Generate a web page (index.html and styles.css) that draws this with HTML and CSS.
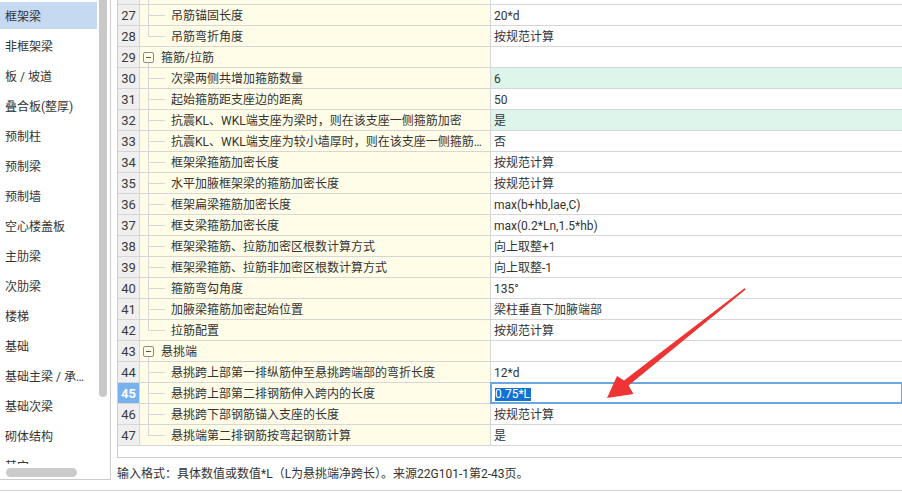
FILE: index.html
```html
<!DOCTYPE html>
<html lang="zh-CN">
<head>
<meta charset="utf-8">
<title>计算设置 - 框架梁</title>
<link rel="stylesheet" href="styles.css">
</head>
<body>
<div class="app">
  <div class="main">
    <aside class="sidebar">
      <div class="side-top">
        <ul class="side-list">
          <li class="side-item active">框架梁</li>
          <li class="side-item">非框架梁</li>
          <li class="side-item">板 / 坡道</li>
          <li class="side-item">叠合板(整厚)</li>
          <li class="side-item">预制柱</li>
          <li class="side-item">预制梁</li>
          <li class="side-item">预制墙</li>
          <li class="side-item">空心楼盖板</li>
          <li class="side-item">主肋梁</li>
          <li class="side-item">次肋梁</li>
          <li class="side-item">楼梯</li>
          <li class="side-item">基础</li>
          <li class="side-item">基础主梁 / 承台梁</li>
          <li class="side-item">基础次梁</li>
          <li class="side-item">砌体结构</li>
          <li class="side-item">其它</li>
        </ul>
        <div class="vscroll"><div class="vthumb"></div></div>
      </div>
      <div class="hscroll"><div class="hthumb"></div></div>
    </aside>

    <section class="panel">
      <div class="grid">
        <div class="rows">
          <div class="row"><div class="num">26</div><div class="tree"><span class="br"></span><span class="lbl">主梁吊筋高度计算方式</span></div><div class="val">按平法图集计算</div></div>
          <div class="row"><div class="num">27</div><div class="tree"><span class="br"></span><span class="lbl">吊筋锚固长度</span></div><div class="val">20*d</div></div>
          <div class="row"><div class="num">28</div><div class="tree"><span class="br last"></span><span class="lbl">吊筋弯折角度</span></div><div class="val">按规范计算</div></div>
          <div class="row"><div class="num">29</div><div class="tree grp"><span class="tog"></span><span class="lbl">箍筋/拉筋</span></div><div class="val"></div></div>
          <div class="row"><div class="num">30</div><div class="tree"><span class="br"></span><span class="lbl">次梁两侧共增加箍筋数量</span></div><div class="val mod">6</div></div>
          <div class="row"><div class="num">31</div><div class="tree"><span class="br"></span><span class="lbl">起始箍筋距支座边的距离</span></div><div class="val">50</div></div>
          <div class="row"><div class="num">32</div><div class="tree"><span class="br"></span><span class="lbl">抗震KL、WKL端支座为梁时，则在该支座一侧箍筋加密</span></div><div class="val mod">是</div></div>
          <div class="row"><div class="num">33</div><div class="tree"><span class="br"></span><span class="lbl">抗震KL、WKL端支座为较小墙厚时，则在该支座一侧箍筋加密</span></div><div class="val">否</div></div>
          <div class="row"><div class="num">34</div><div class="tree"><span class="br"></span><span class="lbl">框架梁箍筋加密长度</span></div><div class="val">按规范计算</div></div>
          <div class="row"><div class="num">35</div><div class="tree"><span class="br"></span><span class="lbl">水平加腋框架梁的箍筋加密长度</span></div><div class="val">按规范计算</div></div>
          <div class="row"><div class="num">36</div><div class="tree"><span class="br"></span><span class="lbl">框架扁梁箍筋加密长度</span></div><div class="val">max(b+hb,lae,C)</div></div>
          <div class="row"><div class="num">37</div><div class="tree"><span class="br"></span><span class="lbl">框支梁箍筋加密长度</span></div><div class="val">max(0.2*Ln,1.5*hb)</div></div>
          <div class="row"><div class="num">38</div><div class="tree"><span class="br"></span><span class="lbl">框架梁箍筋、拉筋加密区根数计算方式</span></div><div class="val">向上取整+1</div></div>
          <div class="row"><div class="num">39</div><div class="tree"><span class="br"></span><span class="lbl">框架梁箍筋、拉筋非加密区根数计算方式</span></div><div class="val">向上取整-1</div></div>
          <div class="row"><div class="num">40</div><div class="tree"><span class="br"></span><span class="lbl">箍筋弯勾角度</span></div><div class="val">135°</div></div>
          <div class="row"><div class="num">41</div><div class="tree"><span class="br"></span><span class="lbl">加腋梁箍筋加密起始位置</span></div><div class="val">梁柱垂直下加腋端部</div></div>
          <div class="row"><div class="num">42</div><div class="tree"><span class="br last"></span><span class="lbl">拉筋配置</span></div><div class="val">按规范计算</div></div>
          <div class="row"><div class="num">43</div><div class="tree grp"><span class="tog"></span><span class="lbl">悬挑端</span></div><div class="val"></div></div>
          <div class="row"><div class="num">44</div><div class="tree"><span class="br"></span><span class="lbl">悬挑跨上部第一排纵筋伸至悬挑跨端部的弯折长度</span></div><div class="val">12*d</div></div>
          <div class="row"><div class="num sel">45</div><div class="tree"><span class="br"></span><span class="lbl">悬挑跨上部第二排钢筋伸入跨内的长度</span></div><div class="val editing"><span class="selected-text">0.75*L</span></div></div>
          <div class="row"><div class="num">46</div><div class="tree"><span class="br"></span><span class="lbl">悬挑跨下部钢筋锚入支座的长度</span></div><div class="val">按规范计算</div></div>
          <div class="row"><div class="num">47</div><div class="tree"><span class="br last"></span><span class="lbl">悬挑端第二排钢筋按弯起钢筋计算</span></div><div class="val">是</div></div>
        </div>
      </div>
      <div class="hint">输入格式：具体数值或数值*L（L为悬挑端净跨长）。来源22G101-1第2-43页。</div>
    </section>
  </div>

  <svg class="arrow" width="902" height="493" viewBox="0 0 902 493" aria-hidden="true">
    <polygon points="607,398 617,376 624,380.5 744.5,288.3 745.7,289.6 628.5,385.5 633.5,394" fill="#ef3434"/>
  </svg>
</div>
</body>
</html>
```

FILE: styles.css
```css
* { box-sizing: border-box; }

html, body {
  margin: 0;
  padding: 0;
  background: #ffffff;
}

body {
  width: 902px;
  height: 493px;
  overflow: hidden;
  font-family: Roboto, "Noto Sans CJK SC", sans-serif;
  font-size: 12px;
  color: #333333;
}

.app {
  position: relative;
  width: 902px;
  height: 493px;
}

.main {
  display: flex;
  align-items: flex-start;
  height: 491px;
  border-bottom: 1px solid #cfcfcf;
}

/* ---------- sidebar ---------- */
.sidebar {
  flex: none;
  width: 111px;
  height: 480px;
  border-right: 1px solid #cdcdcd;
  border-bottom: 1px solid #cdcdcd;
  display: flex;
  flex-direction: column;
}

.side-top {
  display: flex;
  height: 464px;
}

.side-list {
  list-style: none;
  margin: 0;
  padding: 2px 0 0 0;
  width: 97px;
  flex: none;
  overflow: hidden;
}

.side-item {
  height: 27px;
  margin-bottom: 3px;
  line-height: 27px;
  padding: 2px 4px 0 5px;
  white-space: nowrap;
  overflow: hidden;
  text-overflow: ellipsis;
}

.side-item.active {
  background: #c5d9f1;
}

.vscroll {
  flex: 1;
  padding-left: 2px;
}

.vthumb {
  width: 8px;
  height: 397px;
  background: #c9c9c9;
  border-radius: 0 0 4px 4px;
}

.hscroll {
  height: 15px;
  padding: 4px 0 0 6px;
}

.hthumb {
  width: 71px;
  height: 9px;
  background: #cbcbcb;
  border-radius: 5px;
}

/* ---------- grid panel ---------- */
.panel {
  flex: 1;
  margin-left: 6px;
  display: flex;
  flex-direction: column;
  min-width: 0;
}

.grid {
  height: 458px;
  border-left: 1px solid #cdcdcd;
  border-bottom: 1px solid #cdcdcd;
  overflow: hidden;
}

.rows {
  margin-top: -16px;
}

.row {
  display: flex;
  height: 21px;
  border-bottom: 1px solid #d6d6d6;
}

.num {
  flex: none;
  width: 22px;
  border-right: 1px solid #d6d6d6;
  background: #efefef;
  text-align: center;
  line-height: 20px;
  padding-top: 1px;
  font-size: 13px;
  color: #3a3a3a;
  overflow: hidden;
}

.num.sel {
  background: #78b2ee;
  color: #ffffff;
  font-weight: bold;
}

.tree {
  flex: none;
  width: 351px;
  border-right: 1px solid #d6d6d6;
  background: #fffde8;
  display: flex;
  align-items: center;
  overflow: hidden;
}

.tree.grp {
  background:
    linear-gradient(#d2d2d2, #d2d2d2) 8px 15px / 1px 5px no-repeat,
    #fffde8;
}

.br {
  flex: none;
  width: 31px;
  align-self: stretch;
  background:
    linear-gradient(#d6d6d6, #d6d6d6) 8px 0 / 1px 100% no-repeat,
    linear-gradient(#d6d6d6, #d6d6d6) 8px 10px / 17px 1px no-repeat;
}

.br.last {
  background:
    linear-gradient(#d6d6d6, #d6d6d6) 8px 0 / 1px 11px no-repeat,
    linear-gradient(#d6d6d6, #d6d6d6) 8px 10px / 17px 1px no-repeat;
}

.tog {
  flex: none;
  width: 11px;
  height: 11px;
  margin: 1px 7px 0 3px;
  border: 1px solid #8c8c8c;
  border-radius: 2px;
  background: linear-gradient(#555555, #555555) center / 5px 1px no-repeat;
}

.lbl {
  flex: 1;
  align-self: stretch;
  min-width: 0;
  padding: 2px 6px 0 0;
  white-space: nowrap;
  overflow: hidden;
  text-overflow: ellipsis;
  line-height: 18px;
}

.val {
  flex: 1;
  padding: 2px 0 0 3px;
  line-height: 18px;
  white-space: nowrap;
  overflow: hidden;
}

.val.mod {
  background: #ddf5eb;
}

.val.editing {
  box-shadow: 0 0 0 1px #6aa6e2, inset 0 0 0 1px #6aa6e2;
  padding-left: 4px;
}

.selected-text {
  display: inline-block;
  background: #1570d4;
  color: #ffffff;
  line-height: 13px;
  padding: 0 1px 0 0;
  vertical-align: middle;
  margin-top: -1px;
}

.hint {
  height: 32px;
  padding-top: 6px;
  line-height: 20px;
  white-space: nowrap;
}

/* ---------- annotation overlay ---------- */
.arrow {
  position: absolute;
  left: 0;
  top: 0;
  pointer-events: none;
}
```
